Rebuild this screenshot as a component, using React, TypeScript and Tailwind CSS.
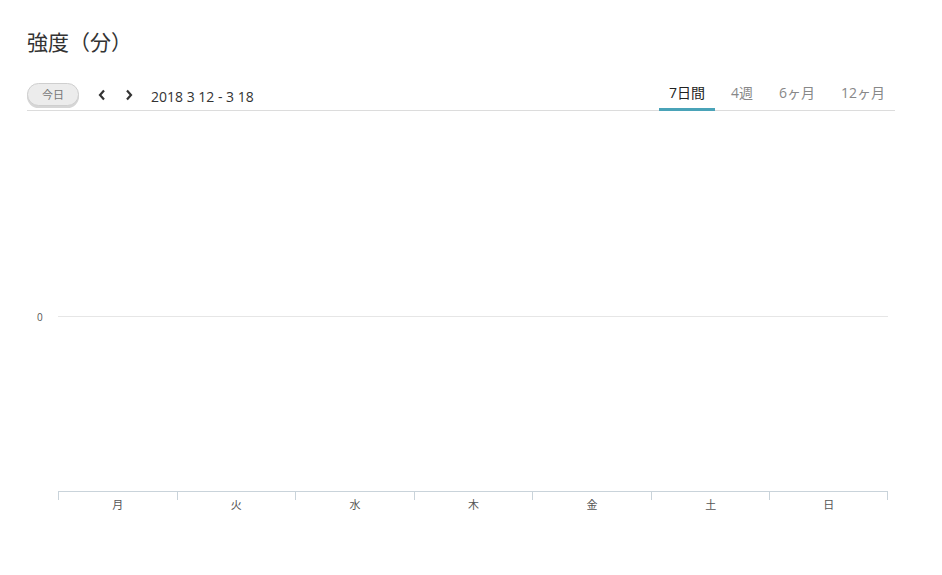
import React from 'react';

const days = ['月', '火', '水', '木', '金', '土', '日'];
const tabs = ['7日間', '4週', '6ヶ月', '12ヶ月'];

const ChevronLeft = () => (
    <svg width="10" height="12" viewBox="0 0 10 12" fill="none">
        <path d="M7 1.5 L3 6 L7 10.5" stroke="#333" strokeWidth="2.2" />
    </svg>
);

const ChevronRight = () => (
    <svg width="10" height="12" viewBox="0 0 10 12" fill="none">
        <path d="M3 1.5 L7 6 L3 10.5" stroke="#333" strokeWidth="2.2" />
    </svg>
);

export default function App() {
    return (
        <div className="w-[942px] h-[575px] bg-white text-[#333] font-['Open_Sans','Noto_Sans_CJK_JP',sans-serif] pl-[27px] pt-[27px]">
            <h1 className="text-[21px] leading-[30px] text-[#333]">強度（分）</h1>

            {/* header row */}
            <div className="mt-[21px] w-[868px] h-[33px] flex justify-between border-b border-[#dcdcdc]">
                <div className="flex items-start pt-[5px]">
                    <button
                        type="button"
                        className="w-[52px] h-[23px] rounded-full bg-[#ececec] border border-[#cfcfcf] shadow-[0_2px_0_#d6d6d6] text-[11px] text-[#777] leading-none"
                    >
                        今日
                    </button>
                    <div className="ml-[18px] mt-[6px] flex items-center gap-[17px]">
                        <ChevronLeft />
                        <ChevronRight />
                    </div>
                    <span className="ml-[17px] mt-[5px] text-[14px] leading-[18px] text-[#333]">2018 3 12 - 3 18</span>
                </div>
                <div className="flex gap-[6px]">
                    {tabs.map((t, i) => (
                        <div
                            key={t}
                            className={`h-[33px] px-[10px] pt-[6px] text-[14px] leading-[18px] ${
                                i === 0 ? 'text-[#222] border-b-[3px] border-[#4aa3b8] mb-[-1px]' : 'text-[#888]'
                            }`}
                        >
                            {t}
                        </div>
                    ))}
                </div>
            </div>

            {/* chart */}
            <div className="w-[861px]">
                <div className="h-[205px]" />
                <div className="flex items-center h-[1px]">
                    <span className="w-[31px] pl-[10px] text-[10px] leading-none text-[#555]">0</span>
                    <div className="w-[830px] h-[1px] bg-[#e6e6e6]" />
                </div>
                <div className="h-[174px]" />
                <div className="ml-[31px] w-[830px] grid grid-cols-7 border-t border-[#c9d3da]">
                    {days.map((d, i) => (
                        <div key={d} className={`relative border-l border-[#c9d3da] h-[8px] ${i === 6 ? 'border-r' : ''}`}>
                            <span className="absolute left-0 right-0 top-[6px] text-center text-[11px] leading-[14px] text-[#555]">{d}</span>
                        </div>
                    ))}
                </div>
            </div>
        </div>
    );
}
